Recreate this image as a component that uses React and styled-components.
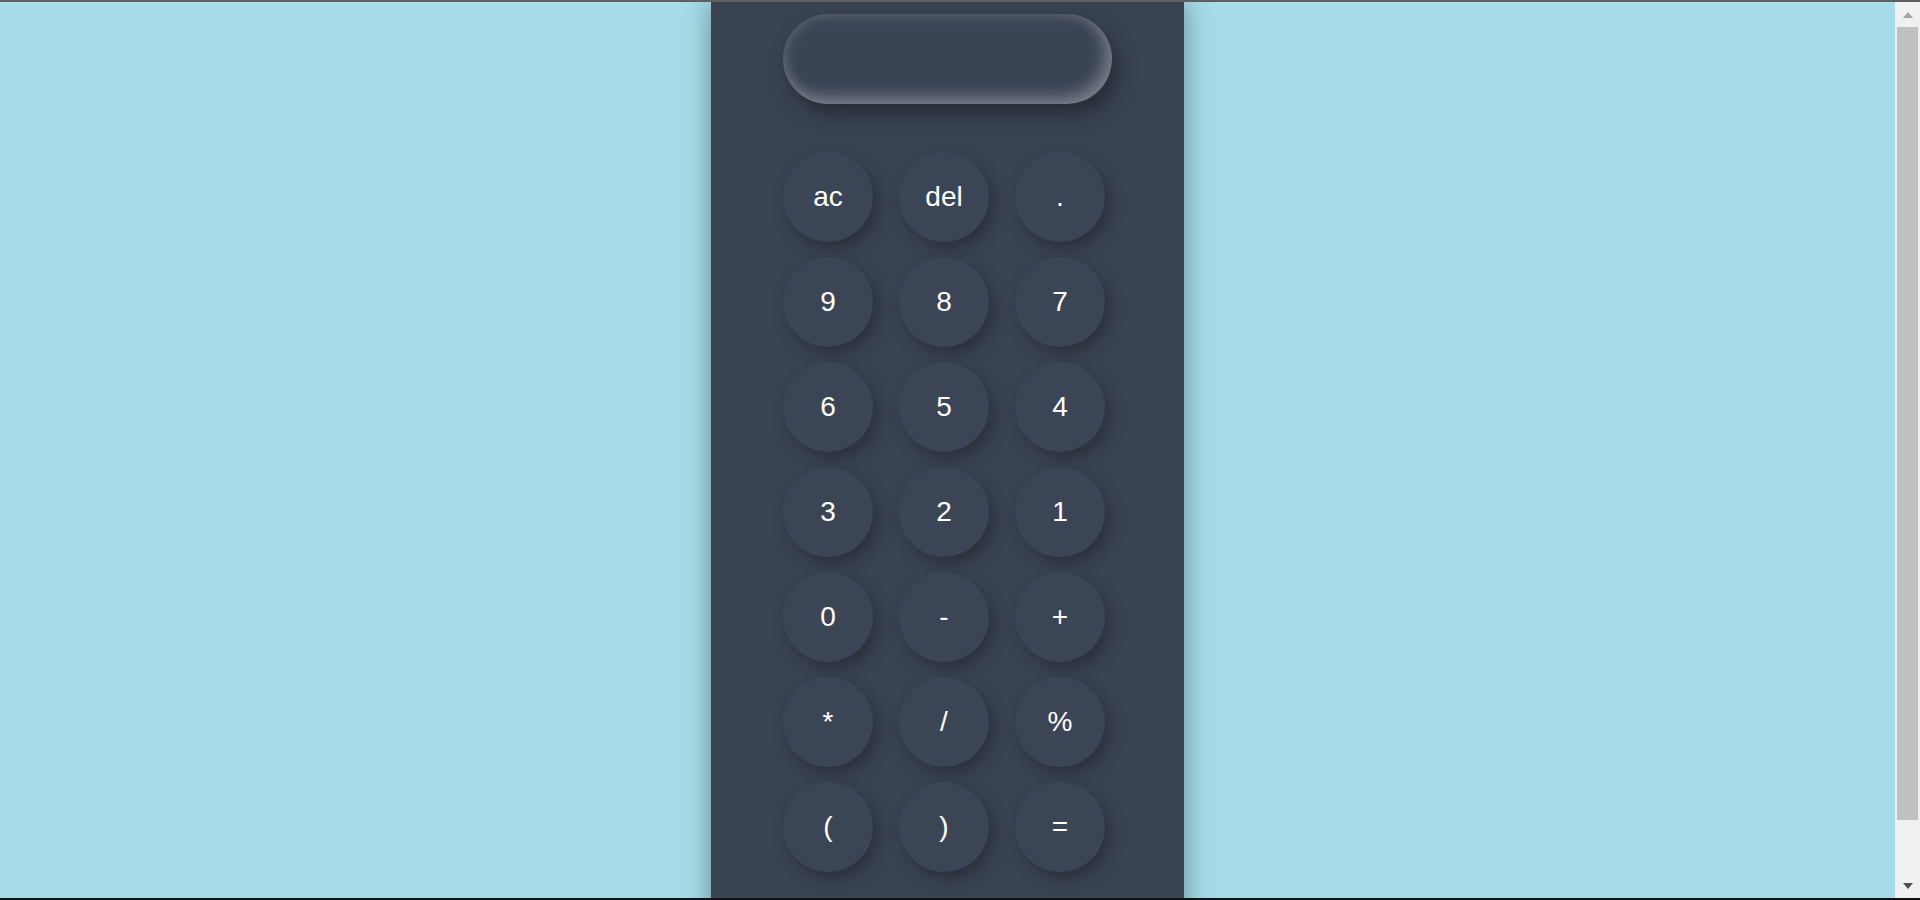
import styled, { createGlobalStyle } from "styled-components";

const GlobalStyle = createGlobalStyle`
    html, body {
        margin: 0;
        padding: 0;
        background: #a6dce8;
    }
    body {
        font-family: 'Liberation Sans', Arial, sans-serif;
    }
`;

const teclas = [
    "ac", "del", ".",
    "9", "8", "7",
    "6", "5", "4",
    "3", "2", "1",
    "0", "-", "+",
    "*", "/", "%",
    "(", ")", "=",
];

export default function App() {
    return (
        <>
            <GlobalStyle />
            <Pagina>
                <Calculadora>
                    <Visor />
                    <Teclado>
                        {teclas.map((t) => (
                            <Tecla key={t}>{t}</Tecla>
                        ))}
                    </Teclado>
                </Calculadora>
            </Pagina>
            <Moldura />
            <Rolagem>
                <Seta $cor="#a3a3a3">
                    <svg width="10" height="6" viewBox="0 0 10 6"><path d="M0 6 L5 0 L10 6 Z" fill="currentColor" /></svg>
                </Seta>
                <Trilho>
                    <Polegar />
                </Trilho>
                <Seta $cor="#505050">
                    <svg width="10" height="6" viewBox="0 0 10 6"><path d="M0 0 L10 0 L5 6 Z" fill="currentColor" /></svg>
                </Seta>
            </Rolagem>
        </>
    );
}

const Pagina = styled.div`
    display: flex;
    justify-content: center;
    padding: 2px 25px 0 0;
    min-height: 100vh;
`;

const Calculadora = styled.div`
    box-sizing: border-box;
    width: 473px;
    padding: 12px 0 74px 72px;
    background: #3a4352;
    box-shadow: 0 0 26px rgba(0, 0, 0, 0.38);
    display: flex;
    flex-direction: column;
`;

const Visor = styled.div`
    width: 329px;
    height: 90px;
    border-radius: 45px;
    background: #3b4454;
    box-shadow:
        inset -6px -7px 16px rgba(255, 255, 255, 0.3),
        inset 3px 3px 14px rgba(255, 255, 255, 0.1),
        6px 10px 20px rgba(0, 0, 0, 0.35);
`;

const Teclado = styled.div`
    display: grid;
    grid-template-columns: repeat(3, 90px);
    column-gap: 26px;
    row-gap: 15px;
    margin-top: 48px;
`;

const Tecla = styled.div`
    width: 90px;
    height: 90px;
    border-radius: 50%;
    background: #3c4555;
    color: #ffffff;
    font-size: 28px;
    display: flex;
    align-items: center;
    justify-content: center;
    box-shadow: 5px 7px 16px rgba(0, 0, 0, 0.28);
    cursor: pointer;
`;

const Moldura = styled.div`
    position: fixed;
    inset: 0;
    border-top: 2px solid #5f5f5f;
    border-bottom: 2px solid #111111;
    pointer-events: none;
    z-index: 2;
`;

const Rolagem = styled.div`
    position: fixed;
    top: 2px;
    right: 0;
    bottom: 2px;
    width: 25px;
    background: #f0f0f0;
    display: flex;
    flex-direction: column;
    align-items: center;
    z-index: 1;
`;

const Seta = styled.div`
    height: 25px;
    display: flex;
    align-items: center;
    justify-content: center;
    color: ${(p) => p.$cor};
`;

const Trilho = styled.div`
    flex: 1;
    width: 100%;
    display: flex;
    justify-content: center;
`;

const Polegar = styled.div`
    width: 21px;
    height: 793px;
    background: #c0c0c0;
`;
